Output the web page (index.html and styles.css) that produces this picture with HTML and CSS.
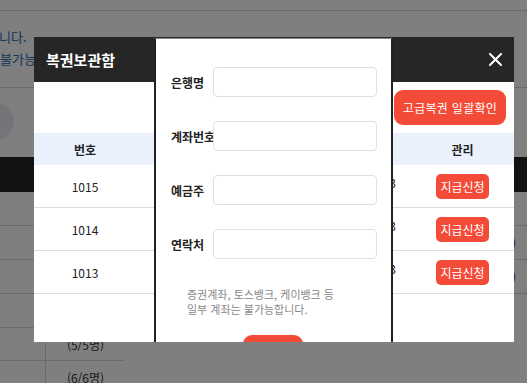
FILE: index.html
```html
<!DOCTYPE html>
<html lang="ko">
<head>
    <meta charset="UTF-8">
    <meta name="viewport" content="width=device-width, initial-scale=1.0">
    <title>복권보관함</title>
    <link rel="stylesheet" href="styles.css">
</head>
<body>
    <!-- page behind the dim layer -->
    <div class="page">
        <div class="page-top"></div>
        <div class="notice">
            <p class="notice-line first">니다.</p>
            <p class="notice-line">불가능합니다.</p>
        </div>
        <div class="profile"><span class="avatar"></span></div>
        <div class="dark-bar"></div>
        <div class="list">
            <div class="list-row"><span class="list-blue">확인</span></div>
            <div class="list-row"><span>(2/2명)</span></div>
            <div class="list-row"><span>(4/4명)</span></div>
            <div class="list-row short"></div>
        </div>
        <div class="count-table">
            <div class="count-row"><span class="count-cell"></span><span class="count-cell text">(5/5명)</span></div>
            <div class="count-row"><span class="count-cell"></span><span class="count-cell text">(6/6명)</span></div>
        </div>
    </div>

    <div class="dim"></div>

    <!-- 복권보관함 modal -->
    <div class="modal">
        <div class="modal-head">
            <h2 class="modal-title">복권보관함</h2>
            <button class="modal-close" aria-label="닫기">
                <svg width="13" height="13" viewBox="0 0 13 13"><path d="M1 1 L12 12 M12 1 L1 12" stroke="#fff" stroke-width="2" stroke-linecap="round"/></svg>
            </button>
        </div>
        <div class="modal-body">
            <div class="modal-actions">
                <button class="btn-red btn-all">고급복권 일괄확인</button>
            </div>
            <div class="ticket-table">
                <div class="ticket-row head">
                    <span class="cell">번호</span>
                    <span class="cell date"></span>
                    <span class="cell">관리</span>
                </div>
                <div class="ticket-row">
                    <span class="cell">1015</span>
                    <span class="cell date">2023-05-23</span>
                    <span class="cell"><button class="btn-red btn-small">지급신청</button></span>
                </div>
                <div class="ticket-row">
                    <span class="cell">1014</span>
                    <span class="cell date">2023-05-23</span>
                    <span class="cell"><button class="btn-red btn-small">지급신청</button></span>
                </div>
                <div class="ticket-row">
                    <span class="cell">1013</span>
                    <span class="cell date">2023-05-23</span>
                    <span class="cell"><button class="btn-red btn-small">지급신청</button></span>
                </div>
            </div>
        </div>

        <!-- 계좌 입력 popup -->
        <div class="account-pop">
            <div class="field">
                <label for="bank">은행명</label>
                <input type="text" id="bank">
            </div>
            <div class="field">
                <label for="account">계좌번호</label>
                <input type="text" id="account">
            </div>
            <div class="field">
                <label for="holder">예금주</label>
                <input type="text" id="holder">
            </div>
            <div class="field">
                <label for="phone">연락처</label>
                <input type="text" id="phone">
            </div>
            <p class="account-note">증권계좌, 토스뱅크, 케이뱅크 등<br>일부 계좌는 불가능합니다.</p>
            <button class="btn-red btn-submit">신청</button>
        </div>
    </div>
</body>
</html>
```

FILE: styles.css
```css
/* base */
html, body {
    margin: 0;
    padding: 0;
}
body {
    font-family: "Noto Sans CJK KR", "Noto Sans", sans-serif;
    background-color: #fff;
    width: 527px;
    height: 383px;
    overflow: hidden;
    position: relative;
}
button {
    font-family: inherit;
    border: 0;
    cursor: pointer;
}

/* page behind */
.page-top {
    height: 10px;
    border-bottom: 1px solid #d6d6d6;
}
.notice {
    padding: 15px 0 17px;
    border-bottom: 1px solid #d6d6d6;
}
.notice-line {
    margin: 0;
    font-size: 13px;
    line-height: 22px;
    color: #2a6cb5;
}
.notice-line.first {
    margin-left: -1px;
}
.profile {
    padding: 15px 0 17px;
}
.avatar {
    display: block;
    width: 37px;
    height: 37px;
    margin-left: -23px;
    border-radius: 50%;
    background-color: #e8ebf2;
}
.dark-bar {
    height: 35px;
    background-color: #242424;
}
.list-row {
    height: 33px;
    border-bottom: 1px solid #d6d6d6;
    display: flex;
    align-items: center;
    justify-content: flex-end;
    padding-right: 11px;
    font-size: 12px;
    color: #333;
}
.list-row.short {
    margin-right: 100px;
}
.list-blue {
    color: #2f78c8;
    margin-right: 2px;
}
.count-table {
    width: 125px;
}
.count-row {
    display: grid;
    grid-template-columns: 45px 80px;
    height: 32px;
    border-bottom: 1px solid #d6d6d6;
}
.count-cell {
    display: flex;
    align-items: center;
    justify-content: center;
    font-size: 12px;
    color: #333;
}
.count-cell.text {
    border-left: 1px solid #d6d6d6;
}

/* dim layer */
.dim {
    position: absolute;
    inset: 0;
    background-color: rgba(0, 0, 0, 0.5);
}

/* modal */
.modal {
    position: absolute;
    left: 34px;
    top: 37px;
    width: 480px;
    height: 305px;
    background-color: #fff;
    overflow: hidden;
}
.modal-head {
    height: 45px;
    background-color: #262626;
    display: flex;
    align-items: center;
    justify-content: space-between;
    padding: 0 12px;
}
.modal-title {
    margin: 0;
    font-size: 15px;
    font-weight: bold;
    color: #fff;
}
.modal-close {
    background: none;
    padding: 0;
    width: 13px;
    height: 13px;
    display: flex;
}
.modal-body {
    padding-top: 8px;
}
.modal-actions {
    display: flex;
    justify-content: flex-end;
    padding-right: 8px;
    margin-bottom: 8px;
}
.btn-red {
    background-color: #f44a38;
    color: #fff;
}
.btn-all {
    width: 112px;
    height: 35px;
    border-radius: 9px;
    font-size: 12px;
    letter-spacing: 0.3px;
    padding: 0;
}
.ticket-row {
    display: grid;
    grid-template-columns: 102px 275px 103px;
    height: 42px;
    border-bottom: 1px solid #dcdcdc;
    font-size: 12px;
    color: #222;
}
.ticket-row.head {
    height: 32px;
    border-bottom: 0;
    background-color: #ebf1fc;
    font-weight: bold;
}
.cell {
    display: flex;
    align-items: center;
    justify-content: center;
}
.cell.date {
    justify-content: flex-end;
    padding-right: 15px;
    padding-bottom: 8px;
}
.btn-small {
    width: 53px;
    height: 25px;
    border-radius: 5px;
    font-size: 12px;
    padding: 0;
}

/* account popup */
.account-pop {
    position: absolute;
    left: 120px;
    top: 1px;
    width: 239px;
    height: 320px;
    box-sizing: border-box;
    background-color: #fff;
    border-top: 1px solid #8a8a8a;
    border-left: 2px solid #222;
    border-right: 2px solid #222;
    padding: 28px 0 0 15px;
}
.field {
    display: flex;
    align-items: center;
    margin-bottom: 24px;
}
.field label {
    width: 42px;
    flex-shrink: 0;
    font-size: 12px;
    font-weight: bold;
    color: #222;
    white-space: nowrap;
}
.field input {
    width: 164px;
    height: 30px;
    box-sizing: border-box;
    border: 1px solid #dde1e6;
    border-radius: 4px;
    margin: 0;
}
.account-note {
    margin: 28px 0 0 16px;
    font-size: 11px;
    line-height: 15px;
    color: #888;
}
.btn-submit {
    display: block;
    margin: 18px auto 0;
    position: relative;
    left: -8px;
    width: 60px;
    height: 32px;
    border-radius: 9px;
    font-size: 12px;
}
```
